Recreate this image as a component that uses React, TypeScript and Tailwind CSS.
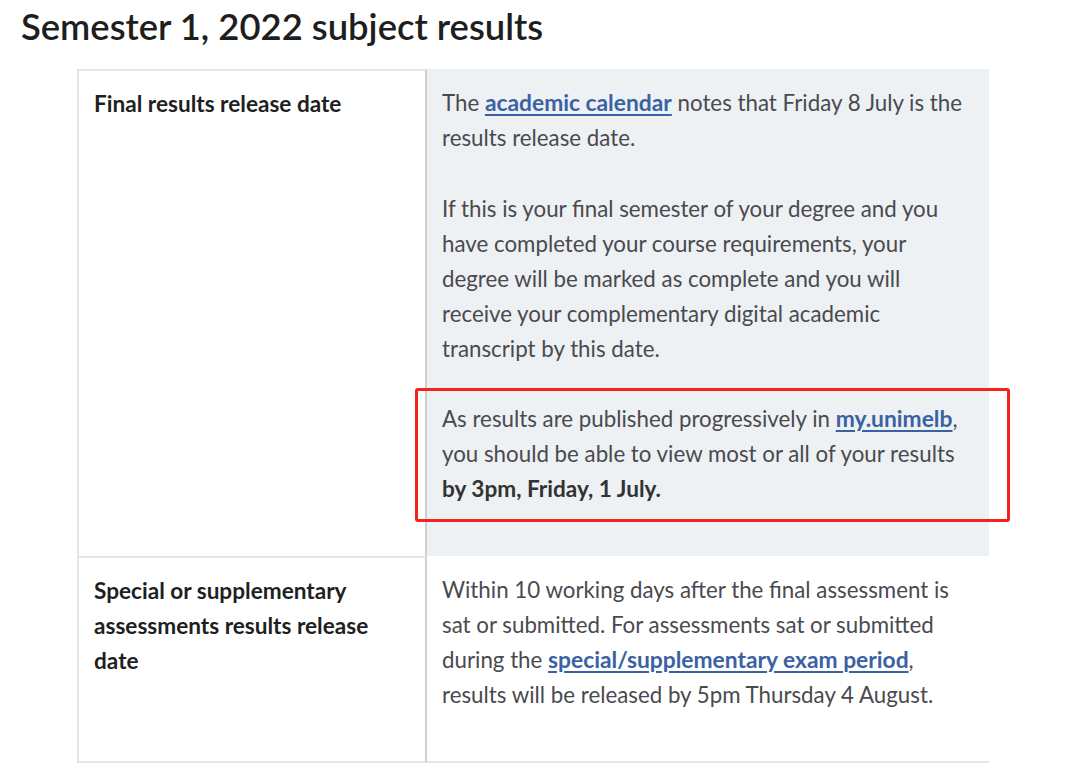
import React from "react";

const font = { fontFamily: "Lato, 'Noto Sans', sans-serif" };

function A({ children }: { children: React.ReactNode }) {
  return (
    <a className="font-bold text-[22.8px] text-[#3a62a2] underline underline-offset-[3px] decoration-[1.5px]">
      {children}
    </a>
  );
}

export default function App() {
  return (
    <div className="w-[1080px] h-[767px] bg-white overflow-hidden relative" style={font}>
      <h1 className="pl-[21px] pt-[3px] text-[36.4px] leading-[46px] font-semibold text-[#1e1e1e]">
        Semester 1, 2022 subject results
      </h1>
      <div className="ml-[77px] mt-[20px] w-[912px] grid grid-cols-[350px_562px] text-[22.3px] leading-[35px]">
        <div className="border-l-2 border-t-2 border-[#e6e6e6] border-r-2 border-r-[#cfcfcf] pl-[15px] pr-2 pt-[15px] font-bold text-[22.6px] text-[#1f1f1f]">
          Final results release date
        </div>
        <div className="bg-[#edf1f4] pl-[15px] pr-2 pt-[16px] pb-[36px] text-[#4a4a4e] whitespace-nowrap">
          <p className="mb-[36px]">
            The <A>academic calendar</A> notes that Friday 8 July is the
            <br />
            results release date.
          </p>
          <p className="mb-[35px]">
            If this is your final semester of your degree and you
            <br />
            have completed your course requirements, your
            <br />
            degree will be marked as complete and you will
            <br />
            receive your complementary digital academic
            <br />
            transcript by this date.
          </p>
          <p className="mb-[14px]">
            As results are published progressively in <A>my.unimelb</A>,
            <br />
            you should be able to view most or all of your results
            <br />
            <b className="font-bold text-[22.6px] text-[#333]">by 3pm, Friday, 1 July.</b>
          </p>
        </div>
        <div className="border-l-2 border-t-2 border-b-2 border-[#e6e6e6] border-r-2 border-r-[#cfcfcf] pl-[15px] pr-2 pt-[15px] h-[207px] font-bold text-[22.6px] text-[#1f1f1f] whitespace-nowrap">
          Special or supplementary
          <br />
          assessments results release
          <br />
          date
        </div>
        <div className="border-b-2 border-[#e6e6e6] pl-[15px] pr-2 pt-[16px] text-[#4a4a4e] whitespace-nowrap">
          Within 10 working days after the final assessment is
          <br />
          sat or submitted. For assessments sat or submitted
          <br />
          during the <A>special/supplementary exam period</A>,
          <br />
          results will be released by 5pm Thursday 4 August.
        </div>
      </div>
      <div className="absolute left-[415px] top-[388px] w-[595px] h-[134px] border-[3px] border-[#f5221b] rounded-[3px]" />
    </div>
  );
}
